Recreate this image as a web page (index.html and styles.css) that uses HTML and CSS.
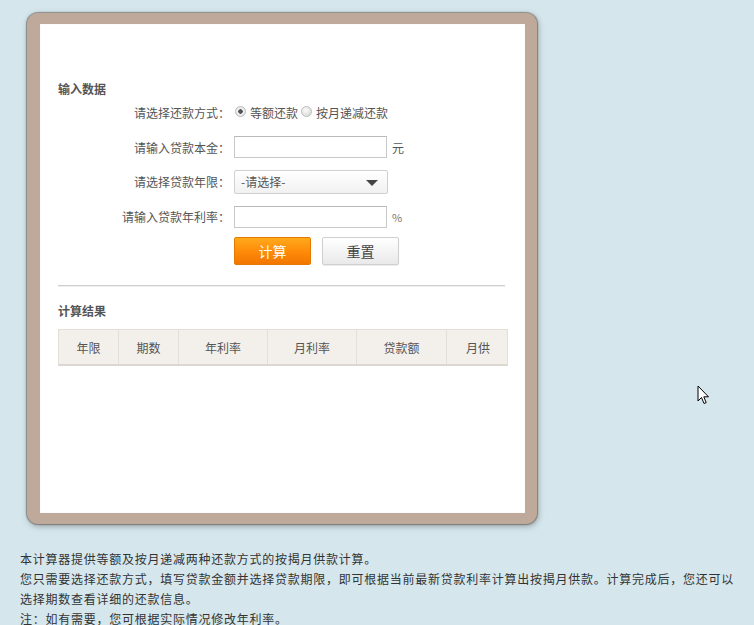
FILE: index.html
```html
<!DOCTYPE html>
<html lang="zh-CN">
<head>
<meta charset="utf-8">
<title>房贷计算器</title>
<link rel="stylesheet" href="styles.css">
</head>
<body>
<div class="frame">
  <div class="panel">
    <h3 class="section-title">输入数据</h3>
    <div class="form">
      <div class="row">
        <label class="label">请选择还款方式：</label>
        <div class="field radios">
          <span class="radio checked"></span><span class="opt">等额还款</span>
          <span class="radio"></span><span class="opt">按月递减还款</span>
        </div>
      </div>
      <div class="row">
        <label class="label">请输入贷款本金：</label>
        <div class="field"><span class="input"></span><span class="unit">元</span></div>
      </div>
      <div class="row">
        <label class="label">请选择贷款年限：</label>
        <div class="field"><span class="select">-请选择-<span class="arrow"></span></span></div>
      </div>
      <div class="row">
        <label class="label">请输入贷款年利率：</label>
        <div class="field"><span class="input"></span><span class="unit pct">%</span></div>
      </div>
      <div class="row btn-row">
        <span class="label"></span>
        <div class="field buttons">
          <button class="btn btn-calc">计算</button>
          <button class="btn btn-reset">重置</button>
        </div>
      </div>
    </div>
    <div class="divider"></div>
    <h3 class="section-title result-title">计算结果</h3>
    <div class="result">
      <div class="cell">年限</div>
      <div class="cell">期数</div>
      <div class="cell">年利率</div>
      <div class="cell">月利率</div>
      <div class="cell">贷款额</div>
      <div class="cell">月供</div>
    </div>
  </div>
</div>
<div class="notes">
  <p>本计算器提供等额及按月递减两种还款方式的按揭月供款计算。</p>
  <p>您只需要选择还款方式，填写贷款金额并选择贷款期限，即可根据当前最新贷款利率计算出按揭月供款。计算完成后，您还可以选择期数查看详细的还款信息。</p>
  <p>注：如有需要，您可根据实际情况修改年利率。</p>
</div>
<svg class="cursor" width="14" height="21" viewBox="0 0 14 21"><path d="M1 1 L1 16 L4.5 12.5 L7 18.5 L9.2 17.6 L6.8 11.8 L11.5 11.8 Z" fill="#fff" stroke="#000" stroke-width="1"/></svg>
</body>
</html>
```
FILE: styles.css
```css
html, body {
  margin: 0;
  padding: 0;
}
body {
  background: #d5e7ed;
  font-family: "Noto Sans CJK SC", "Liberation Sans", sans-serif;
  font-size: 12px;
  color: #444;
  width: 754px;
  height: 625px;
  overflow: hidden;
  position: relative;
}
.frame {
  margin: 13px 0 0 27px;
  width: 510px;
  height: 511px;
  box-sizing: border-box;
  padding: 11px 12px 11px 13px;
  background: #bea99b;
  border-radius: 11px;
  box-shadow: 0 0 1px 1px rgba(90, 80, 70, 0.55), 1px 2px 6px rgba(60, 60, 60, 0.45);
}
.panel {
  background: #fff;
  height: 489px;
  box-sizing: border-box;
  padding: 58px 17px 0 18px;
  box-shadow: inset 0 0 1px rgba(0,0,0,0.15);
}
.section-title {
  margin: 0;
  font-size: 12px;
  font-weight: bold;
  color: #555;
  line-height: 14px;
}
.form {
  margin-top: -1px;
}
.row {
  display: flex;
  align-items: center;
  height: 34.8px;
}
.label {
  width: 172px;
  text-align: right;
  color: #555;
  flex: none;
}
.field {
  display: flex;
  align-items: center;
  margin-left: 4px;
}
.radios .opt {
  margin: 0 2px 0 4px;
  color: #555;
}
.radio {
  width: 11px;
  height: 11px;
  border-radius: 50%;
  box-sizing: border-box;
  border: 1px solid #bbb;
  background: radial-gradient(circle at 40% 35%, #fafafa, #d4d4d4);
  display: inline-block;
  margin-left: 1px;
  position: relative;
  top: -1px;
}
.radio.checked {
  background: radial-gradient(circle, #555 0, #555 2px, #f4f4f4 2.5px, #ddd 100%);
}
.input {
  display: block;
  width: 153px;
  height: 22px;
  box-sizing: border-box;
  border: 1px solid #c9c9c9;
  border-top-color: #b9b9b9;
  background: #fff;
}
.unit {
  margin-left: 5px;
  color: #555;
}
.unit.pct {
  font-size: 11px;
  color: #777;
}
.select {
  display: flex;
  align-items: center;
  width: 154px;
  height: 24px;
  box-sizing: border-box;
  border: 1px solid #d0d0d0;
  border-radius: 2px;
  background: linear-gradient(#ffffff, #f1f1f1);
  padding-left: 6px;
  color: #555;
  position: relative;
}
.arrow {
  position: absolute;
  right: 9px;
  top: 9px;
  width: 0;
  height: 0;
  border-left: 6px solid transparent;
  border-right: 6px solid transparent;
  border-top: 6px solid #444;
}
.btn-row {
  height: 34px;
}
.buttons {
  gap: 11px;
}
.btn {
  width: 77px;
  height: 28px;
  border-radius: 2px;
  font-family: "Noto Sans CJK SC", sans-serif;
  font-size: 14px;
  padding: 0;
  cursor: pointer;
}
.btn-calc {
  border: 1px solid #e67a00;
  background: linear-gradient(#ffaa1c, #ff8c0a 50%, #f27600);
  color: #fff;
}
.btn-reset {
  border: 1px solid #cfcfcf;
  background: linear-gradient(#ffffff, #e9e9e9);
  color: #444;
  box-shadow: 0 1px 1px rgba(0,0,0,0.08);
}
.divider {
  margin-top: 17px;
  height: 1px;
  width: 447px;
  background: #cfcfcf;
  box-shadow: 0 1px 0 #eee;
}
.result-title {
  margin-top: 18px;
}
.result {
  margin-top: 11px;
  width: 450px;
  display: grid;
  grid-template-columns: 60px 60px 89px 89px 90px 62px;
  box-sizing: border-box;
  background: #f3f0ec;
  border: 1px solid #e3dfd9;
  border-bottom: 2px solid #dcd7d0;
}
.result .cell {
  height: 34px;
  display: flex;
  align-items: center;
  justify-content: center;
  color: #555;
  border-right: 1px solid #e3dfd9;
}
.result .cell:last-child {
  border-right: none;
}
.notes {
  margin: 25px 0 0 20px;
  width: 722px;
  color: #333;
  font-size: 12px;
  letter-spacing: 0.75px;
  line-height: 20px;
}
.notes p {
  margin: 0;
}
.cursor {
  position: absolute;
  left: 697px;
  top: 385px;
}
```
